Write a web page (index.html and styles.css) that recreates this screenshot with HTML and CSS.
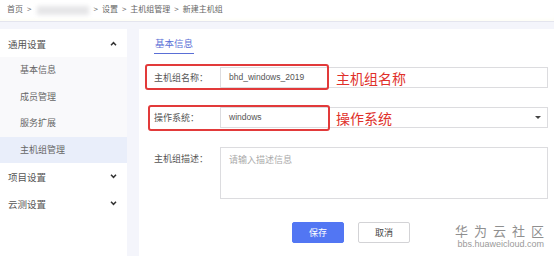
FILE: index.html
```html
<!DOCTYPE html>
<html lang="zh">
<head>
  <meta charset="UTF-8">
  <title>新建主机组</title>
  <link rel="stylesheet" href="styles.css">
</head>
<body>
  <!-- 面包屑 -->
  <div class="crumb">
    <span>首页</span><span class="sep">&gt;</span>
    <span class="blur"></span>
    <span class="sep">&gt;</span><span>设置</span>
    <span class="sep">&gt;</span><span>主机组管理</span>
    <span class="sep">&gt;</span><span>新建主机组</span>
  </div>

  <div class="main">
    <!-- 侧边栏 -->
    <nav class="sidebar">
      <div class="group open">通用设置
        <svg class="chev" viewBox="0 0 8 6" width="7" height="5"><polyline points="1,5 4,2 7,5" fill="none" stroke="#333" stroke-width="1.8"/></svg>
      </div>
      <ul class="sub">
        <li>基本信息</li>
        <li>成员管理</li>
        <li>服务扩展</li>
        <li class="active">主机组管理</li>
      </ul>
      <div class="group">项目设置
        <svg class="chev" viewBox="0 0 8 6" width="7" height="5"><polyline points="1,1 4,4 7,1" fill="none" stroke="#333" stroke-width="1.8"/></svg>
      </div>
      <div class="group">云测设置
        <svg class="chev" viewBox="0 0 8 6" width="7" height="5"><polyline points="1,1 4,4 7,1" fill="none" stroke="#333" stroke-width="1.8"/></svg>
      </div>
    </nav>

    <!-- 内容 -->
    <div class="content">
      <div class="tabs"><span class="tab">基本信息</span></div>

      <div class="row">
        <label>主机组名称：</label>
        <div class="field latin">bhd_windows_2019</div>
        <span class="mark mark1"></span>
        <span class="note note1">主机组名称</span>
      </div>

      <div class="row">
        <label>操作系统：</label>
        <div class="field select latin">windows<span class="caret"></span></div>
        <span class="mark mark2"></span>
        <span class="note note2">操作系统</span>
      </div>

      <div class="row top">
        <label>主机组描述：</label>
        <div class="field area">请输入描述信息</div>
      </div>

      <div class="btns">
        <button class="btn primary">保存</button>
        <button class="btn">取消</button>
        <div class="wm">
          <div class="wm-cn">华为云社区</div>
          <div class="wm-en">bbs.huaweicloud.com</div>
        </div>
      </div>
    </div>
  </div>
</body>
</html>
```

FILE: styles.css
```css
/* 基础 */
body {
  margin: 0;
  font-family: "Noto Sans CJK SC", "Noto Sans", sans-serif;
  color: #333;
  width: 554px;
  height: 257px;
  overflow: hidden;
}

/* 面包屑 */
.crumb {
  height: 22px;
  display: flex;
  align-items: flex-start;
  padding: 3px 0 0 7px;
  box-sizing: border-box;
  font-size: 8px;
  color: #666;
  background: #fff;
  border-bottom: 1px solid #e4e5ee;
  box-shadow: 0 -3px 4px -2px #fdfdf2 inset;
}
.crumb .sep { margin: 0 4px; }
.crumb .blur {
  width: 52px;
  height: 9px;
  margin: 3px 0 0 2px;
  background: #e6e6e8;
  filter: blur(2px);
}

/* 布局 */
.main {
  display: flex;
  background: #f4f5fb;
  height: 234px;
  padding-top: 7px;
  box-sizing: border-box;
}
.sidebar {
  width: 127px;
  background: #fff;
  margin-right: 12px;
  font-size: 9.5px;
  padding-top: 1px;
}
.group {
  height: 27px;
  display: flex;
  align-items: center;
  justify-content: space-between;
  padding: 0 10px 0 8px;
  color: #555;
}
.sub { list-style: none; margin: 0; padding: 0; background: #f9f9fb; }
.sub li {
  height: 26.5px;
  line-height: 26.5px;
  padding-left: 20px;
  font-size: 9px;
  color: #666;
}
.sub li.active { background: #e9eefa; }

.content {
  flex: 1;
  background: #fff;
  padding: 7px 6px 0 15px;
  position: relative;
}

/* 标签页 */
.tabs { height: 31px; font-size: 9.5px; }
.tab {
  display: inline-block;
  color: #5a6fd6;
  padding: 0 1px 3px;
  border-bottom: 1px solid #5a6fd6;
}

/* 表单 */
.row {
  display: flex;
  align-items: center;
  margin-bottom: 19px;
  position: relative;
  font-size: 9px;
}
.row.top { align-items: flex-start; margin-bottom: 16px; }
.row label { width: 66px; color: #555; }
.row.top label { padding-top: 5px; }
.field {
  flex: 1;
  height: 21px;
  box-sizing: border-box;
  border: 1px solid #dcdcdf;
  padding: 0 8px;
  line-height: 19px;
  font-size: 9px;
  color: #555;
}
.latin { font-family: "Liberation Sans", Arial, sans-serif; font-size: 8.5px; }
.select { position: relative; }
.caret {
  position: absolute;
  right: 6px;
  top: 8px;
  border: 3px solid transparent;
  border-top: 3px solid #444;
}
.area { height: 52px; color: #aaa; padding-top: 2px; }

/* 红色标注 */
.mark {
  position: absolute;
  border: 2px solid #e23a3a;
  border-radius: 3px;
  box-sizing: border-box;
}
.mark1 { left: -9px; top: -3px; width: 184px; height: 26px; }
.mark2 { left: -6px; top: -2px; width: 182px; height: 26px; }
.note {
  position: absolute;
  font-size: 14px;
  color: #e0302a;
  line-height: 1;
}
.note1 { left: 182px; top: 4px; }
.note2 { left: 182px; top: 4px; }

/* 按钮 */
.btns {
  display: flex;
  align-items: center;
  padding-left: 138px;
}
.btn {
  width: 52px;
  height: 21px;
  font-family: inherit;
  font-size: 9px;
  border: 1px solid #d3d3d6;
  background: #fff;
  color: #444;
  border-radius: 2px;
  margin-right: 14px;
  padding: 0;
}
.btn.primary { background: #5276f3; border-color: #5276f3; color: #fff; }
.wm {
  margin-left: auto;
  margin-right: 4px;
  margin-top: 8px;
  color: #8f8f8f;
  white-space: nowrap;
  text-align: right;
}
.wm-cn { font-size: 13px; letter-spacing: 6px; line-height: 15px; margin-right: -6px; }
.wm-en {
  font-family: "Liberation Sans", Arial, sans-serif;
  font-size: 9px;
  line-height: 11px;
  margin-top: 1px;
  color: #9a9a9a;
}
```
